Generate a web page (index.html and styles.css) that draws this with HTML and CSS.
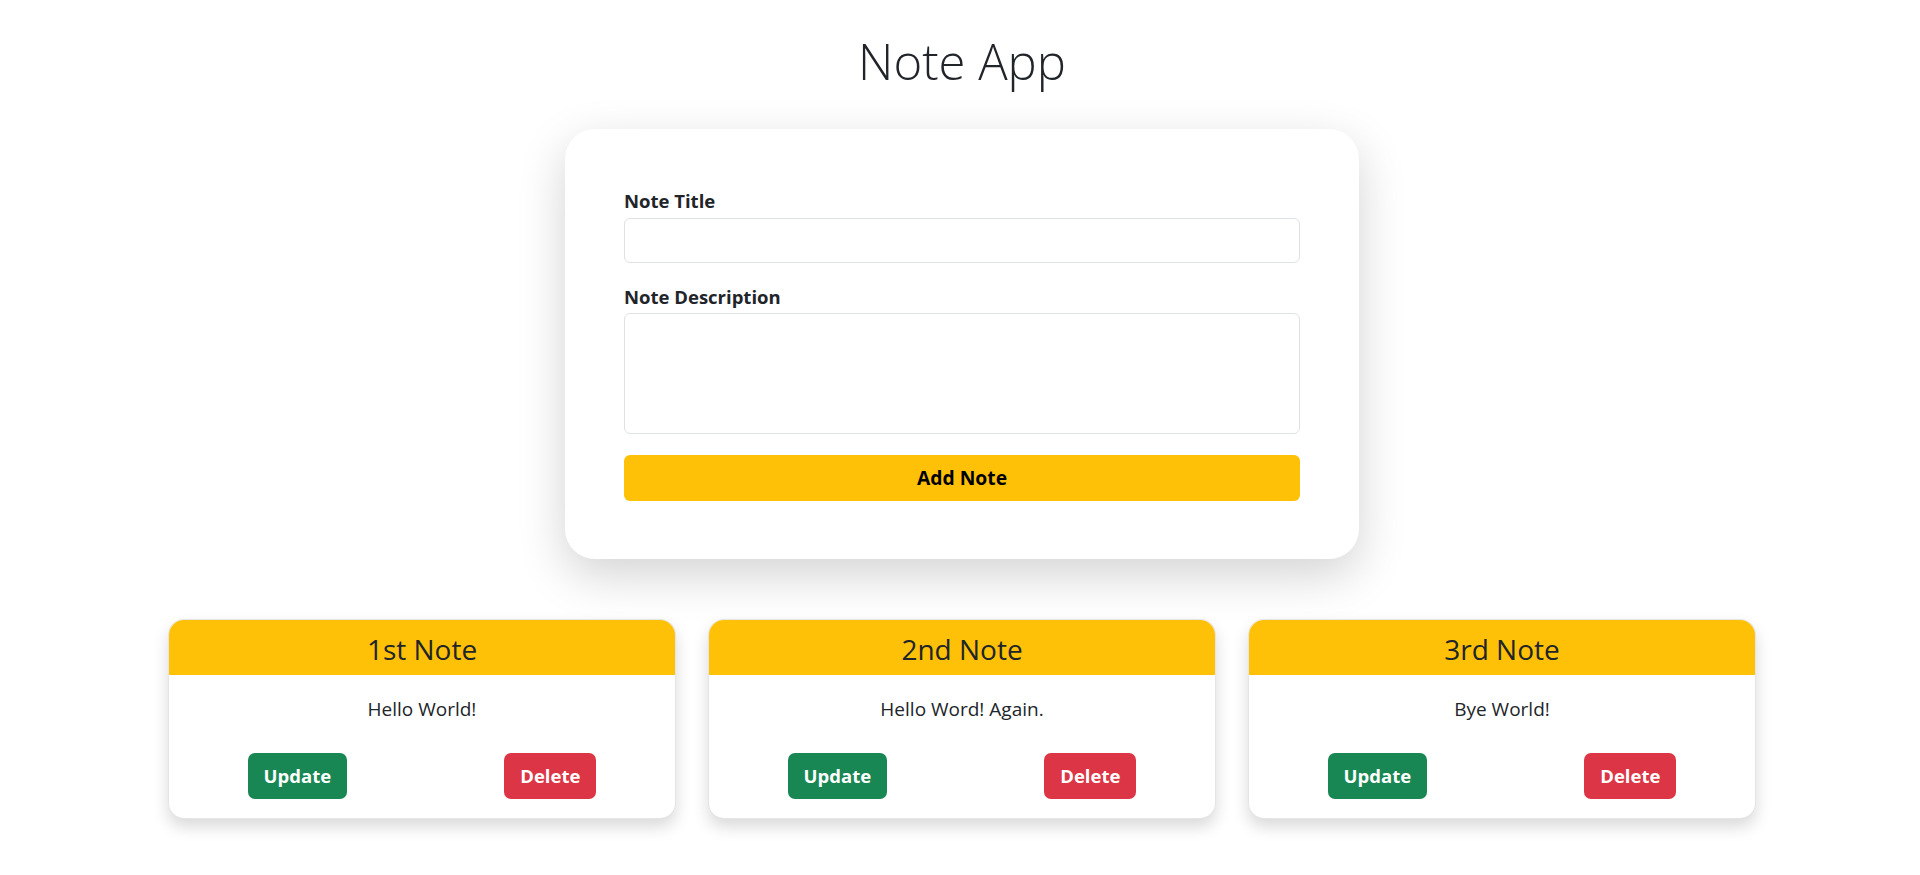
FILE: index.html
```html
<!DOCTYPE html>
<html lang="en">
<head>
<meta charset="utf-8">
<title>Note App</title>
<link rel="stylesheet" href="styles.css">
</head>
<body>
  <h1 class="app-title">Note App</h1>
  <form class="form-card">
    <label class="field-label" for="title">Note Title</label>
    <input class="field-input" id="title" type="text">
    <label class="field-label second" for="desc">Note Description</label>
    <textarea class="field-area" id="desc"></textarea>
    <button type="button" class="add-btn">Add Note</button>
  </form>
  <section class="notes">
    <article class="note">
      <header class="note-head">1st Note</header>
      <div class="note-body">
        <p class="note-text">Hello World!</p>
        <div class="note-actions">
          <button type="button" class="btn btn-update">Update</button>
          <button type="button" class="btn btn-delete">Delete</button>
        </div>
      </div>
    </article>
    <article class="note">
      <header class="note-head">2nd Note</header>
      <div class="note-body">
        <p class="note-text">Hello Word! Again.</p>
        <div class="note-actions">
          <button type="button" class="btn btn-update">Update</button>
          <button type="button" class="btn btn-delete">Delete</button>
        </div>
      </div>
    </article>
    <article class="note">
      <header class="note-head">3rd Note</header>
      <div class="note-body">
        <p class="note-text">Bye World!</p>
        <div class="note-actions">
          <button type="button" class="btn btn-update">Update</button>
          <button type="button" class="btn btn-delete">Delete</button>
        </div>
      </div>
    </article>
  </section>
</body>
</html>
```
FILE: styles.css
```css
* { box-sizing: border-box; }
html { background: #fff; }
body {
  margin: 0;
  padding: 0 0 57px 4px;
  background: #fff;
  color: #212529;
  font-family: "Open Sans", "Noto Sans", sans-serif;
}
.app-title {
  margin: 33px 0 38px;
  text-align: center;
  font-size: 49px;
  font-weight: 300;
  line-height: 57.6px;
}
.form-card {
  width: 794px;
  margin: 0 auto;
  padding: 60px 59px 58px;
  background: #fff;
  border-radius: 30px;
  box-shadow: 0 16px 48px rgba(0, 0, 0, 0.175);
  display: flex;
  flex-direction: column;
}
.field-label {
  display: block;
  font-size: 18.5px;
  font-weight: 700;
  line-height: 24px;
  margin-bottom: 5px;
}
.field-label.second { margin-top: 22px; margin-bottom: 4px; }
.field-input, .field-area {
  display: block;
  width: 100%;
  border: 1px solid #dee2e6;
  border-radius: 6px;
  background: #fff;
  font: inherit;
}
.field-input { height: 45px; }
.field-area { height: 121px; resize: none; }
.add-btn {
  margin-top: 21px;
  height: 46px;
  border: 0;
  border-radius: 6px;
  background: #ffc107;
  color: #000;
  font-family: inherit;
  font-size: 19.3px;
  font-weight: 700;
}
.notes {
  width: 1588px;
  margin: 60px auto 0;
  display: flex;
  gap: 32px;
}
.note {
  flex: 1;
  height: 200px;
  border: 1px solid rgba(0, 0, 0, 0.1);
  border-radius: 16px;
  overflow: hidden;
  background: #fff;
  box-shadow: 0 8px 16px rgba(0, 0, 0, 0.15);
}
.note-head {
  height: 55px;
  padding-top: 3px;
  background: #ffc107;
  text-align: center;
  font-size: 28px;
  line-height: 52px;
}
.note-body {
  padding: 20px 0 0;
}
.note-text {
  margin: 0 0 30px;
  text-align: center;
  font-size: 19px;
  line-height: 28px;
}
.note-actions {
  display: flex;
  justify-content: space-around;
}
.btn {
  height: 46px;
  padding: 0 16px;
  border: 0;
  border-radius: 7px;
  color: #fff;
  font-family: inherit;
  font-size: 18.5px;
  font-weight: 700;
}
.btn-update { background: #198754; }
.btn-delete { background: #dc3545; }
```
